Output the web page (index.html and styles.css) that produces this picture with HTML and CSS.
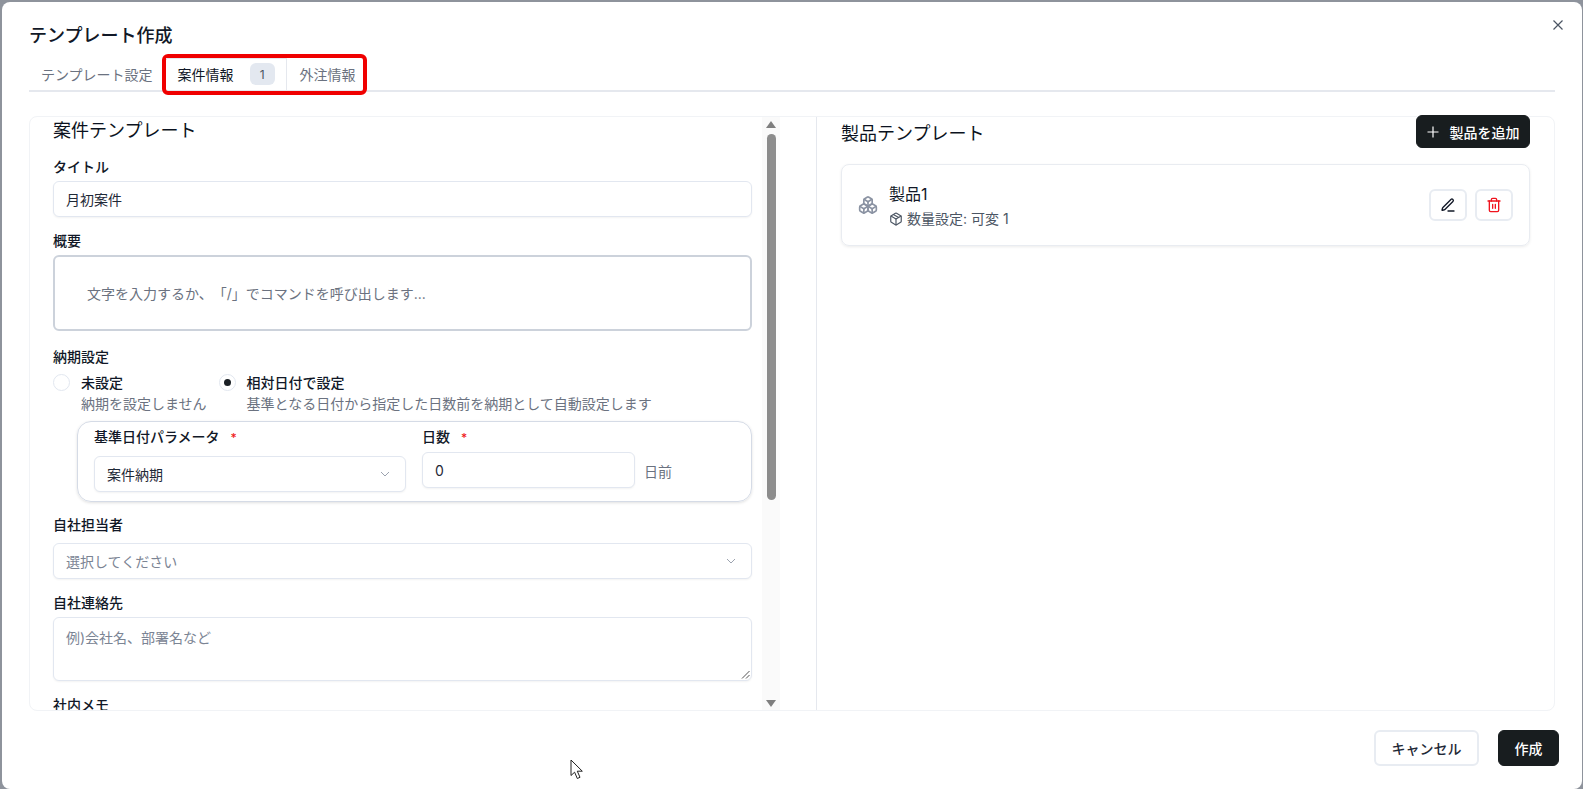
FILE: index.html
```html
<!DOCTYPE html>
<html lang="ja">
<head>
    <meta charset="UTF-8">
    <title>テンプレート作成</title>
    <link rel="stylesheet" href="styles.css">
</head>
<body>
    <div class="dialog">
        <button class="close-button" aria-label="閉じる">
            <svg width="12" height="12" viewBox="0 0 12 12"><path d="M1.5 1.5l9 9M10.5 1.5l-9 9" stroke="#4b5563" stroke-width="1.2" fill="none"/></svg>
        </button>
        <h1 class="dialog-title">テンプレート作成</h1>

        <div class="tabs">
            <div class="tab">テンプレート設定</div>
            <div class="tab-highlight">
                <div class="tab tab-active">案件情報<span class="tab-badge">1</span></div>
                <div class="tab">外注情報</div>
            </div>
        </div>

        <div class="panel">
            <div class="left-col">
                <div class="form-scroll">
                    <h2 class="section-title">案件テンプレート</h2>

                    <label class="field-label">タイトル</label>
                    <div class="input input-title">月初案件</div>

                    <label class="field-label label-summary">概要</label>
                    <div class="editor">文字を入力するか、「/」でコマンドを呼び出します...</div>

                    <label class="field-label label-due">納期設定</label>
                    <div class="radio-row">
                        <div class="radio-item">
                            <span class="radio"></span>
                            <div>
                                <div class="radio-title">未設定</div>
                                <div class="radio-desc">納期を設定しません</div>
                            </div>
                        </div>
                        <div class="radio-item">
                            <span class="radio radio-on"></span>
                            <div>
                                <div class="radio-title">相対日付で設定</div>
                                <div class="radio-desc">基準となる日付から指定した日数前を納期として自動設定します</div>
                            </div>
                        </div>
                    </div>

                    <div class="due-box">
                        <div class="due-param">
                            <div class="due-label">基準日付パラメータ<span class="required">*</span></div>
                            <div class="input select due-select">案件納期
                                <svg class="chevron" width="12" height="12" viewBox="0 0 12 12"><path d="M2 4l4 4 4-4" stroke="#9ca3af" stroke-width="1" fill="none"/></svg>
                            </div>
                        </div>
                        <div class="due-days">
                            <div class="due-label">日数<span class="required">*</span></div>
                            <div class="days-row">
                                <div class="input days-input">0</div>
                                <span class="days-unit">日前</span>
                            </div>
                        </div>
                    </div>

                    <label class="field-label label-owner">自社担当者</label>
                    <div class="input select owner-select placeholder">選択してください
                        <svg class="chevron" width="12" height="12" viewBox="0 0 12 12"><path d="M2 4l4 4 4-4" stroke="#9ca3af" stroke-width="1" fill="none"/></svg>
                    </div>

                    <label class="field-label label-contact">自社連絡先</label>
                    <div class="input textarea placeholder">例)会社名、部署名など
                        <svg class="resize-grip" width="9" height="9" viewBox="0 0 9 9"><path d="M8.5 1L1 8.5M8.5 5L5 8.5" stroke="#555" stroke-width="1" fill="none"/></svg>
                    </div>

                    <label class="field-label label-memo">社内メモ</label>
                </div>
                <div class="scrollbar">
                    <span class="scroll-arrow scroll-up"></span>
                    <div class="scroll-track"><div class="scroll-thumb"></div></div>
                    <span class="scroll-arrow scroll-down"></span>
                </div>
            </div>

            <div class="right-col">
                <div class="right-head">
                    <h2 class="section-title right-title">製品テンプレート</h2>
                    <button class="btn btn-dark btn-add">
                        <svg width="12" height="12" viewBox="0 0 12 12"><path d="M6 .5v11M.5 6h11" stroke="#fff" stroke-width="1.2" fill="none"/></svg>
                        製品を追加
                    </button>
                </div>

                <div class="product-card">
                    <svg class="product-icon" width="20" height="20" viewBox="0 0 24 24" fill="none" stroke="#8b93a3" stroke-width="2" stroke-linecap="round" stroke-linejoin="round">
                        <path d="M2.97 12.92A2 2 0 0 0 2 14.63v3.24a2 2 0 0 0 .97 1.71l3 1.8a2 2 0 0 0 2.06 0L12 19v-5.5l-5-3-4.03 2.42Z"/>
                        <path d="m7 16.5-4.74-2.85"/>
                        <path d="m7 16.5 5-3"/>
                        <path d="M7 16.5v5.17"/>
                        <path d="M12 13.5V19l3.97 2.38a2 2 0 0 0 2.06 0l3-1.8a2 2 0 0 0 .97-1.71v-3.24a2 2 0 0 0-.97-1.71L17 10.5l-5 3Z"/>
                        <path d="m17 16.5-5-3"/>
                        <path d="m17 16.5 4.74-2.85"/>
                        <path d="M17 16.5v5.17"/>
                        <path d="M7.97 4.42A2 2 0 0 0 7 6.13v4.37l5 3 5-3V6.13a2 2 0 0 0-.97-1.71l-3-1.8a2 2 0 0 0-2.06 0l-3 1.8Z"/>
                        <path d="M12 8 7.26 5.15"/>
                        <path d="m12 8 4.74-2.85"/>
                        <path d="M12 13.5V8"/>
                    </svg>
                    <div class="product-info">
                        <div class="product-name">製品1</div>
                        <div class="product-meta">
                            <svg width="14" height="14" viewBox="0 0 24 24" fill="none" stroke="#4b5563" stroke-width="2" stroke-linecap="round" stroke-linejoin="round">
                                <path d="m7.5 4.27 9 5.15"/>
                                <path d="M21 8a2 2 0 0 0-1-1.73l-7-4a2 2 0 0 0-2 0l-7 4A2 2 0 0 0 3 8v8a2 2 0 0 0 1 1.73l7 4a2 2 0 0 0 2 0l7-4A2 2 0 0 0 21 16Z"/>
                                <path d="m3.3 7 8.7 5 8.7-5"/>
                                <path d="M12 22V12"/>
                            </svg>
                            数量設定: 可変 1
                        </div>
                    </div>
                    <button class="icon-btn">
                        <svg width="16" height="16" viewBox="0 0 24 24" fill="none" stroke="#111827" stroke-width="2" stroke-linecap="round" stroke-linejoin="round">
                            <path d="M12 21h9"/>
                            <path d="M16.376 3.622a1 1 0 0 1 3.002 3.002L7.368 18.635a2 2 0 0 1-.855.506l-2.872.838a.5.5 0 0 1-.62-.62l.838-2.872a2 2 0 0 1 .506-.854z"/>
                        </svg>
                    </button>
                    <button class="icon-btn">
                        <svg width="16" height="16" viewBox="0 0 24 24" fill="none" stroke="#f0141e" stroke-width="2" stroke-linecap="round" stroke-linejoin="round">
                            <path d="M3 6h18"/>
                            <path d="M19 6v14c0 1-1 2-2 2H7c-1 0-2-1-2-2V6"/>
                            <path d="M8 6V4c0-1 1-2 2-2h4c1 0 2 1 2 2v2"/>
                            <path d="M10 11v6M14 11v6"/>
                        </svg>
                    </button>
                </div>
            </div>
        </div>

        <div class="dialog-footer">
            <button class="btn btn-light">キャンセル</button>
            <button class="btn btn-dark btn-create">作成</button>
        </div>

        <svg class="mouse-cursor" width="15" height="21" viewBox="0 0 15 21"><path d="M1 1v15.500l3.600-3.300 2.700 6.300 2.700-1.200-2.700-6.100h5z" fill="#fff" stroke="#222" stroke-width="1" stroke-linejoin="round"/></svg>
    </div>
</body>
</html>
```

FILE: styles.css
```css
* {
    box-sizing: border-box;
}
body {
    margin: 0;
    height: 789px;
    overflow: hidden;
    padding: 2px 1px 0 2px;
    background-color: #8e939c;
    font-family: Inter, "Noto Sans CJK JP", sans-serif;
    font-size: 14px;
    color: #111827;
}
.dialog {
    position: relative;
    height: 787px;
    background: white;
    border-radius: 8px;
    padding: 22px 27px 0 27px;
    display: flex;
    flex-direction: column;
}
.close-button {
    position: absolute;
    top: 15px;
    right: 16px;
    width: 16px;
    height: 16px;
    padding: 2px;
    border: none;
    background: none;
    display: flex;
}
.dialog-title {
    margin: 0 0 1px;
    font-size: 18px;
    line-height: 24px;
    font-weight: 500;
}

/* tabs */
.tabs {
    display: flex;
    align-items: flex-start;
    height: 43px;
    width: 1526px;
    border-bottom: 2px solid #e5e8ee;
    padding-left: 12px;
}
.tab {
    display: flex;
    align-items: center;
    height: 36px;
    margin-top: 7px;
    color: #6b7280;
    font-size: 14px;
}
.tab-highlight {
    display: flex;
    flex-shrink: 0;
    width: 205px;
    height: 41px;
    margin: 5px 0 0 9px;
    border: 4px solid #f00000;
    border-radius: 6px;
}
.tab-highlight .tab {
    margin-top: 0;
    height: 33px;
    padding-bottom: 2px;
}
.tab-active {
    width: 121px;
    padding-left: 12px;
    border-right: 1px solid #e5e8ee;
    border-top: 1px solid #e5e8ee;
}
.tab-highlight .tab-active {
    color: #111827;
}
.tab-badge {
    width: 25px;
    height: 22px;
    margin-left: 16px;
    border-radius: 6px;
    background: #e3e8f0;
    color: #4b5563;
    font-size: 12px;
    display: flex;
    align-items: center;
    justify-content: center;
}
.tab-highlight .tab:last-child {
    padding-left: 13px;
}

/* main panel */
.panel {
    width: 1526px;
    height: 595px;
    margin-top: 24px;
    border: 1px solid #f1f3f6;
    border-radius: 8px;
    display: flex;
}
.left-col {
    width: 787px;
    display: flex;
    border-right: 1px solid #e5e8ee;
    padding-right: 27px;
}
.form-scroll {
    width: 732px;
    padding: 1px 0 0 23px;
    overflow: hidden;
    border-bottom-left-radius: 8px;
}
.section-title {
    margin: 0;
    font-size: 18px;
    line-height: 26px;
    font-weight: 400;
    color: #0b1220;
}
.field-label {
    display: block;
    font-size: 14px;
    line-height: 20px;
    font-weight: 500;
    margin-top: 13px;
}
.label-summary {
    margin-top: 14px;
}
.label-due {
    margin-top: 16px;
}
.label-owner {
    margin-top: 13px;
}
.label-contact {
    margin-top: 14px;
}
.label-memo {
    margin-top: 14px;
}
.input {
    display: flex;
    align-items: center;
    width: 699px;
    height: 36px;
    margin-top: 5px;
    padding: 0 12px;
    border: 1px solid #e2e7f0;
    border-radius: 6px;
    box-shadow: 0 1px 2px rgba(0, 0, 0, 0.05);
    font-size: 14px;
    color: #1f2937;
    background: white;
}
.input-title {
    margin-top: 4px;
}
.placeholder {
    color: #7b8494;
}
.select {
    justify-content: space-between;
}
.owner-select {
    margin-top: 8px;
}
.chevron {
    margin-right: 2px;
}
.editor {
    width: 699px;
    height: 76px;
    margin-top: 4px;
    padding-left: 32px;
    display: flex;
    align-items: center;
    border: 2px solid #ccd2db;
    border-radius: 6px;
    color: #6b7280;
    font-size: 14px;
    text-spacing-trim: space-all;
}
.radio-row {
    display: flex;
    margin-top: 5px;
}
.radio-item {
    display: flex;
    gap: 11px;
    margin-right: 12px;
}
.radio {
    width: 17px;
    height: 17px;
    margin-top: 2px;
    border: 1px solid #e2e7f0;
    border-radius: 50%;
    flex-shrink: 0;
    display: flex;
    align-items: center;
    justify-content: center;
}
.radio-on::after {
    content: "";
    width: 7px;
    height: 7px;
    border-radius: 50%;
    background: #1a1f24;
}
.radio-title {
    font-size: 14px;
    line-height: 21px;
    font-weight: 500;
}
.radio-desc {
    font-size: 14px;
    line-height: 21px;
    color: #6b7280;
}
.due-box {
    width: 675px;
    height: 81px;
    margin: 7px 0 0 24px;
    padding: 5px 16px 0 16px;
    border: 1px solid #d5dbe6;
    border-radius: 14px;
    box-shadow: 0 1px 3px rgba(0, 0, 0, 0.12);
    display: flex;
    gap: 16px;
}
.due-param {
    width: 312px;
}
.due-label {
    font-size: 14px;
    line-height: 20px;
    font-weight: 500;
}
.required {
    color: #ef1c1c;
    margin-left: 11px;
    font-size: 12px;
}
.due-select {
    width: 312px;
    height: 36px;
    margin-top: 8px;
}
.days-row {
    display: flex;
    align-items: center;
    gap: 9px;
    margin-top: 4px;
}
.days-input {
    width: 213px;
    margin-top: 0;
}
.days-unit {
    color: #6b7280;
    margin-top: 1px;
}
.textarea {
    position: relative;
    height: 64px;
    margin-top: 4px;
    align-items: flex-start;
    padding-top: 9px;
}
.resize-grip {
    position: absolute;
    right: 1px;
    bottom: 1px;
}

/* scrollbar */
.scrollbar {
    width: 18px;
    background: #fafafa;
    display: flex;
    flex-direction: column;
    align-items: center;
}
.scroll-track {
    flex: 1;
    width: 100%;
    padding-top: 6px;
    display: flex;
    justify-content: center;
}
.scroll-thumb {
    width: 9px;
    height: 366px;
    border-radius: 5px;
    background: #8c8c8c;
}
.scroll-arrow {
    width: 0;
    height: 0;
    border-left: 5px solid transparent;
    border-right: 5px solid transparent;
}
.scroll-up {
    margin-top: 4px;
    border-bottom: 7px solid #7f7f7f;
}
.scroll-down {
    margin-bottom: 3px;
    border-top: 7px solid #7f7f7f;
}

/* right column */
.right-col {
    flex: 1;
    padding: 0 24px 0 24px;
}
.right-head {
    display: flex;
    justify-content: space-between;
    align-items: center;
    height: 33px;
    margin-top: -2px;
}
.right-title {
    margin-top: 4px;
}
.btn {
    border-radius: 6px;
    font-family: inherit;
    font-size: 14px;
    font-weight: 500;
    display: flex;
    align-items: center;
    justify-content: center;
}
.btn-dark {
    background: #181d1f;
    color: white;
    border: 1px solid #181d1f;
}
.btn-add {
    width: 114px;
    height: 33px;
    gap: 11px;
}
.product-card {
    height: 82px;
    margin-top: 16px;
    padding: 0 16px 0 16px;
    border: 1px solid #e9ecf1;
    border-radius: 8px;
    box-shadow: 0 1px 3px rgba(0, 0, 0, 0.08);
    display: flex;
    align-items: center;
    gap: 8px;
}
.product-icon {
    margin-right: 3px;
}
.product-info {
    flex: 1;
    padding-top: 1px;
}
.product-name {
    font-size: 16px;
    line-height: 22px;
    font-weight: 400;
    margin-bottom: 4px;
}
.product-meta {
    display: flex;
    align-items: center;
    gap: 4px;
    font-size: 14px;
    line-height: 20px;
    color: #4b5563;
}
.icon-btn {
    width: 38px;
    height: 32px;
    padding: 0;
    background: white;
    border: 2px solid #e8ecf2;
    border-radius: 6px;
    display: flex;
    align-items: center;
    justify-content: center;
}

/* footer */
.dialog-footer {
    display: flex;
    justify-content: flex-end;
    gap: 19px;
    margin-top: 19px;
    margin-right: -4px;
}
.btn-light {
    width: 105px;
    height: 36px;
    background: white;
    border: 2px solid #e8ecf2;
    color: #1f2937;
}
.btn-create {
    width: 61px;
    height: 36px;
}
.mouse-cursor {
    position: absolute;
    left: 568px;
    top: 757px;
}
```
